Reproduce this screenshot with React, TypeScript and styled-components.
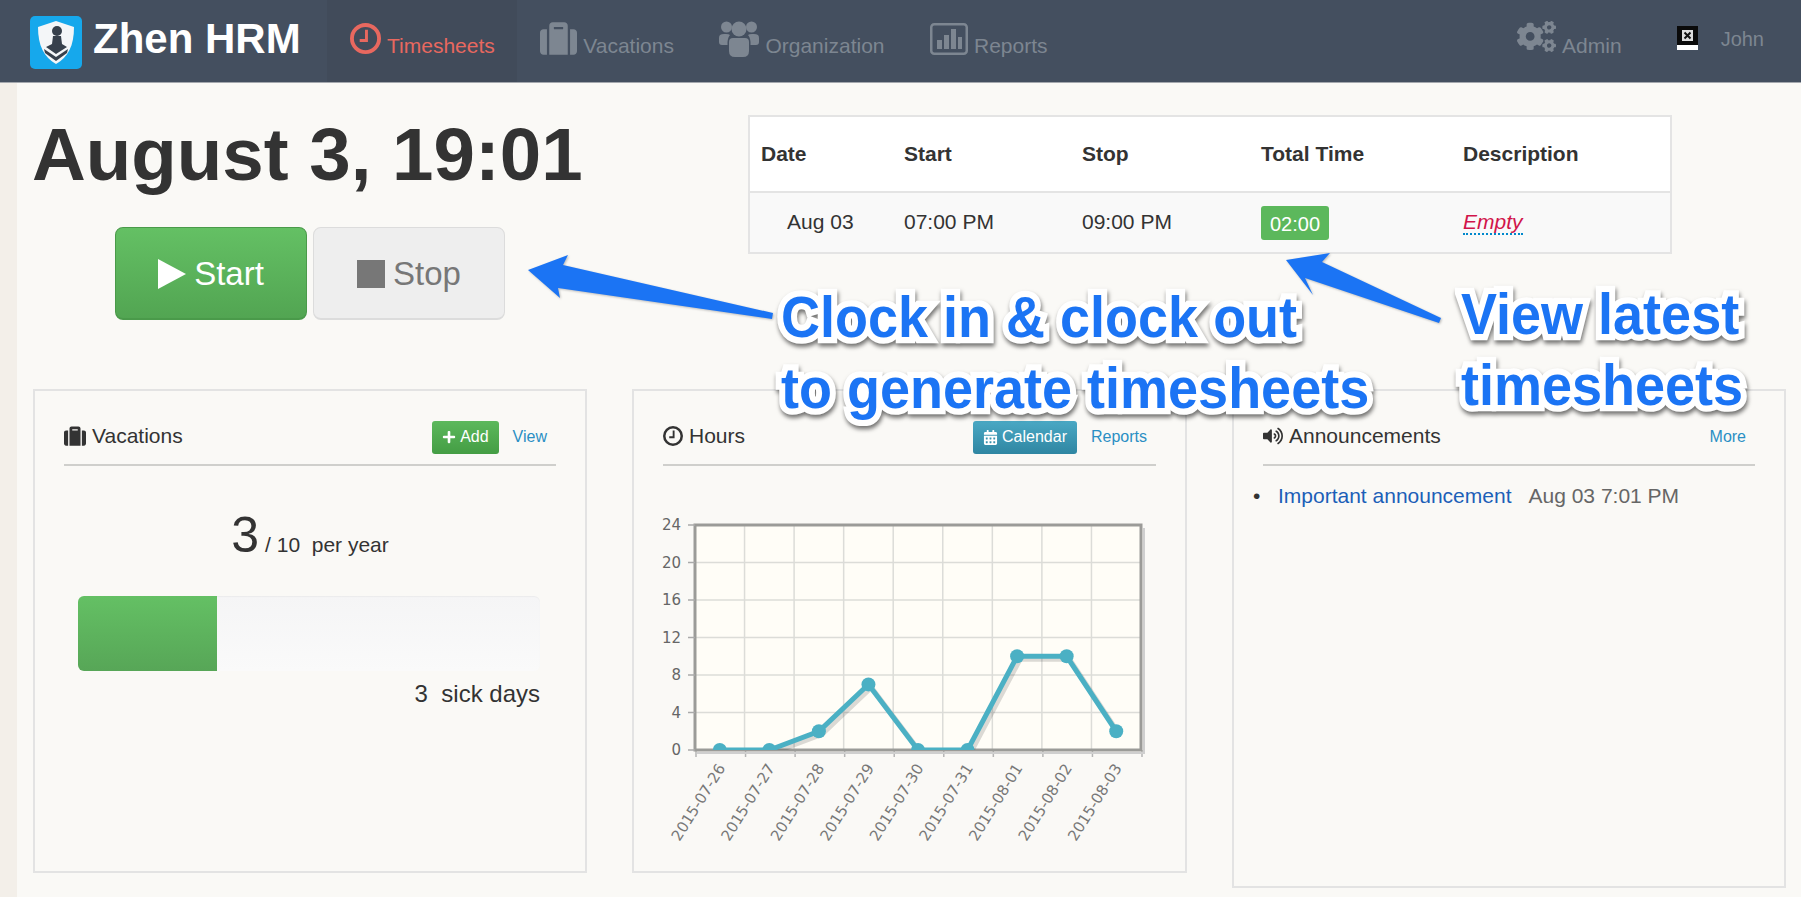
import { ReactNode } from "react"
import styled, { createGlobalStyle } from "styled-components"
import { FaCalendarAlt, FaCogs, FaPlus, FaSuitcase, FaVolumeUp } from "react-icons/fa"

const GlobalStyle = createGlobalStyle`
  html, body {
    margin: 0;
    padding: 0;
    background: #faf9f6;
    font-family: "Liberation Sans", Arial, sans-serif;
    color: #333333;
  }
  * { box-sizing: border-box; }
`

const Page = styled.div`
  position: relative;
  width: 1801px;
  height: 897px;
  overflow: hidden;
`

const Navbar = styled.header`
  display: flex;
  align-items: stretch;
  height: 83px;
  padding: 0 37px 0 30px;
  background: #444f5f;
  border-bottom: 1px solid #a4a8ae;
`

const Brand = styled.div`
  display: flex;
  align-items: center;
  gap: 11px;
  width: 297px;
  padding-bottom: 4px;
  color: #ffffff;
  font-size: 42px;
  font-weight: bold;
  & > svg {
    margin-top: 6px;
  }
`

const NavTab = styled.div<{ $active?: boolean }>`
  display: flex;
  align-items: center;
  gap: 6px;
  padding: 0 22.5px 0 23px;
  color: ${({ $active }) => ($active ? "#e8685f" : "#7d8691")};
  background: ${({ $active }) => ($active ? "#414b5a" : "transparent")};
  font-size: 21px;
  & > svg {
    margin-top: -5px;
  }
`

const NavLabel = styled.span`
  padding-top: 10px;
`

const NavRight = styled.div`
  display: flex;
  align-items: center;
  margin-left: auto;
`

const AdminItem = styled.div`
  display: flex;
  align-items: center;
  gap: 6px;
  color: #7d8691;
  font-size: 21px;
  margin-right: 55px;
  & > svg {
    margin-top: -9px;
  }
`

const UserName = styled.span`
  margin: -4px 0 0 23px;
  color: #7d8691;
  font-size: 20px;
`

const BrokenImage = styled.svg`
  margin-top: -7px;
`

const Body = styled.div`
  display: flex;
  height: 814px;
`

const Strip = styled.div`
  flex: none;
  width: 17px;
  background: #f3efe9;
`

const Main = styled.main`
  flex: 1;
  padding-left: 16px;
`

const TopRow = styled.section`
  display: flex;
  height: 306px;
`

const ClockColumn = styled.div`
  flex: none;
  width: 715px;
`

const Title = styled.h1`
  margin: 30px 0 30px -1px;
  color: #333333;
  font-size: 74.5px;
  font-weight: bold;
  line-height: 84px;
`

const ClockButtons = styled.div`
  display: flex;
  gap: 6px;
  margin-left: 82px;
`

const ClockButton = styled.button<{ $primary?: boolean }>`
  display: flex;
  align-items: center;
  justify-content: center;
  gap: 8px;
  width: 192px;
  height: 93px;
  padding: 2px 0 0;
  border: 1px solid ${({ $primary }) => ($primary ? "#4a9a4a" : "#dcdcdc")};
  border-bottom-width: 2px;
  border-radius: 8px;
  color: ${({ $primary }) => ($primary ? "#ffffff" : "#777777")};
  background: ${({ $primary }) =>
    $primary ? "linear-gradient(#64c064, #52a552)" : "#eeeeee"};
  font-family: inherit;
  font-size: 33px;
`

const TimesheetTable = styled.table`
  flex: none;
  width: 924px;
  height: 139px;
  margin-top: 32px;
  border: 2px solid #e4e4e4;
  border-collapse: collapse;
  table-layout: fixed;
  background: #ffffff;
  font-size: 21px;
`

const HeadCell = styled.th<{ $width?: number }>`
  width: ${({ $width }) => ($width ? `${$width}px` : "auto")};
  height: 76px;
  padding: 0 0 0 11px;
  border-bottom: 2px solid #e4e4e4;
  text-align: left;
  font-size: 21px;
`

const DataCell = styled.td<{ $indent?: number }>`
  height: 61px;
  padding: 0 0 2px ${({ $indent }) => $indent ?? 11}px;
  background: #f9f9f9;
  vertical-align: middle;
`

const TimeBadge = styled.span`
  display: inline-block;
  width: 68px;
  height: 34px;
  margin-top: 3px;
  border-radius: 3px;
  color: #ffffff;
  background: #5cb85c;
  font-size: 20px;
  line-height: 36px;
  text-align: center;
`

const EmptyValue = styled.span`
  color: #d1144a;
  font-style: italic;
  border-bottom: 2px dotted #0088cc;
`

const PanelGrid = styled.section`
  display: grid;
  grid-template-columns: 554px 555px 554px;
  gap: 45px;
  align-items: start;
`

const Panel = styled.article<{ $height: number }>`
  height: ${({ $height }) => $height}px;
  padding: 30px 29px 0;
  border: 2px solid #e3e3e3;
`

const PanelHead = styled.div`
  display: flex;
  align-items: center;
  height: 45px;
  padding-bottom: 11px;
  border-bottom: 2px solid #cfcfcc;
`

const PanelTitle = styled.h2`
  display: flex;
  align-items: center;
  gap: 6px;
  margin: -3px auto 0 0;
  color: #333333;
  font-size: 21px;
  font-weight: normal;
`

const SmallButton = styled.span<{ $color: "green" | "blue" }>`
  display: flex;
  align-items: center;
  justify-content: center;
  gap: 4px;
  height: 33px;
  margin-right: 14px;
  padding: 0 10px;
  border-radius: 3px;
  color: #ffffff;
  background: ${({ $color }) =>
    $color === "green"
      ? "linear-gradient(#5cb85c, #449d44)"
      : "linear-gradient(#4aa8c4, #2f86a2)"};
  font-size: 16px;
`

const PanelLink = styled.a`
  margin-right: 9px;
  color: #2a8fc4;
  font-size: 16px;
`

const VacationSummary = styled.div`
  display: flex;
  align-items: baseline;
  justify-content: center;
  gap: 6px;
  margin: 42px 0 24px;
  font-size: 21px;
  line-height: 54px;
`

const BigNumber = styled.span`
  font-size: 50px;
`

const ProgressTrack = styled.div`
  height: 75px;
  margin: 0 16px 0 14px;
  overflow: hidden;
  border-radius: 6px;
  background: linear-gradient(#f5f5f6, #fafafa);
  box-shadow: inset 0 1px 1px rgba(0, 0, 0, 0.04);
`

const ProgressFill = styled.div`
  height: 100%;
  background: linear-gradient(#64c064, #57a657);
`

const SickDays = styled.div`
  margin: 9px 16px 0 14px;
  font-size: 24px;
  text-align: right;
  white-space: pre;
`

const ChartFrame = styled.svg`
  display: block;
  margin: 51px 0 0 -28px;
`

const AnnouncementItem = styled.div`
  display: flex;
  align-items: center;
  margin: 18px 0 0 -10px;
  font-size: 21px;
`

const Bullet = styled.span`
  width: 25px;
`

const AnnouncementLink = styled.a`
  margin-right: 17px;
  color: #1c5fb8;
`

const AnnouncementDate = styled.span`
  color: #666666;
`

const Callout = styled.div<{ $left: number; $top: number }>`
  position: absolute;
  left: ${({ $left }) => $left}px;
  top: ${({ $top }) => $top}px;
  color: #1b74f4;
  font-size: 54px;
  font-weight: bold;
  line-height: 68px;
  white-space: pre;
  transform: scaleY(1.05);
  transform-origin: top left;
  -webkit-text-stroke: 12px #ffffff;
  paint-order: stroke fill;
  filter: drop-shadow(1px 3px 2px rgba(0, 0, 0, 0.55));
`

const ArrowLayer = styled.svg`
  position: absolute;
  left: 0;
  top: 0;
  filter: drop-shadow(1px 1px 1px rgba(0, 0, 0, 0.25));
`

const chartValues = [0, 0, 2, 7, 0, 0, 10, 10, 2]
const chartDates = [
  "2015-07-26",
  "2015-07-27",
  "2015-07-28",
  "2015-07-29",
  "2015-07-30",
  "2015-07-31",
  "2015-08-01",
  "2015-08-02",
  "2015-08-03",
]

const plotLeft = 60
const plotTop = 8
const plotWidth = 446
const plotHeight = 225
const stepX = plotWidth / 9
const valueY = (value: number) => plotTop + plotHeight - (value / 24) * plotHeight

function Logo() {
  return (
    <svg width="52" height="53" viewBox="0 0 52 53">
      <rect width="52" height="53" rx="5" fill="#16a8ec" />
      <path d="M26 5 L44 11 C44 30 38 41 26 48 C14 41 8 30 8 11 Z" fill="#f4f6f8" />
      <circle cx="27" cy="15" r="5" fill="#37404c" />
      <path d="M23 20 h8 l1 8 l5 3 l-11 7 l-10 -7 l6 -3 Z" fill="#37404c" />
      <path d="M14 33 l12 8 l12 -8 l-1 4 l-11 8 l-11 -8 Z" fill="#37404c" />
    </svg>
  )
}

// the clock-o of the old icon font: hands at twelve and nine
function ClockIcon({ size, weight }: { size: number; weight: number }) {
  return (
    <svg width={size} height={size} viewBox="0 0 32 32" fill="none" stroke="currentColor">
      <circle cx="16" cy="16" r={16 - weight / 2} strokeWidth={weight} />
      <path d="M17 7 V18 H10" strokeWidth={weight * 0.75} />
    </svg>
  )
}

function GroupIcon() {
  return (
    <svg width="40" height="37" viewBox="0 0 40 37" fill="currentColor">
      <circle cx="7.5" cy="7" r="5.5" />
      <circle cx="32.5" cy="7" r="5.5" />
      <circle cx="20" cy="9" r="7.5" />
      <path d="M1 15 Q3 13.5 7 14 Q10 14 11 15 Q9 17 8.5 22 V25 H3 Q0 25 0 22 V18 Q0 16 1 15 Z" />
      <path d="M39 15 Q37 13.5 33 14 Q30 14 29 15 Q31 17 31.5 22 V25 H37 Q40 25 40 22 V18 Q40 16 39 15 Z" />
      <path d="M10 22 Q10 18 14 18 H26 Q30 18 30 22 V31 Q30 37 24 37 H16 Q10 37 10 31 Z" />
    </svg>
  )
}

function ReportIcon() {
  return (
    <svg width="38" height="32" viewBox="0 0 38 32" fill="currentColor">
      <rect x="1.25" y="1.25" width="35.5" height="29.5" rx="3" fill="none" stroke="currentColor" strokeWidth="2.5" />
      <rect x="7" y="17" width="5" height="9" />
      <rect x="14" y="12" width="5" height="14" />
      <rect x="21" y="6" width="5" height="20" />
      <rect x="28" y="14" width="4" height="12" />
    </svg>
  )
}

function PlayIcon() {
  return (
    <svg width="28" height="30" viewBox="0 0 28 30" fill="currentColor">
      <path d="M0 0 L28 15 L0 30 Z" />
    </svg>
  )
}

function StopIcon() {
  return (
    <svg width="28" height="28" viewBox="0 0 28 28" fill="currentColor">
      <rect width="28" height="28" />
    </svg>
  )
}

function HoursChart() {
  const points = chartValues.map((value, index) => ({
    x: plotLeft + stepX * (index + 0.5),
    y: valueY(value),
  }))
  const line = points.map((p) => `${p.x},${p.y}`).join(" ")
  const shadowLine = points.map((p) => `${p.x + 3},${p.y + 3}`).join(" ")

  return (
    <ChartFrame width="540" height="345" viewBox="0 0 540 345">
      <defs>
        <clipPath id="plot-clip">
          <rect x={plotLeft} y={plotTop - 12} width={plotWidth} height={plotHeight + 12} />
        </clipPath>
      </defs>
      <rect x={plotLeft} y={plotTop} width={plotWidth} height={plotHeight} fill="#fffdf7" />
      {[4, 8, 12, 16, 20].map((tick) => (
        <line
          key={`grid-y-${tick}`}
          x1={plotLeft}
          x2={plotLeft + plotWidth}
          y1={valueY(tick)}
          y2={valueY(tick)}
          stroke="#dcdcd8"
          strokeWidth="1.5"
        />
      ))}
      {chartDates.slice(1).map((date, index) => (
        <line
          key={`grid-x-${date}`}
          x1={plotLeft + stepX * (index + 1)}
          x2={plotLeft + stepX * (index + 1)}
          y1={plotTop}
          y2={plotTop + plotHeight}
          stroke="#dcdcd8"
          strokeWidth="1.5"
        />
      ))}
      {[...chartDates, "end"].map((date, index) => (
        <line
          key={`tick-x-${date}`}
          x1={plotLeft + stepX * index + 1}
          x2={plotLeft + stepX * index + 1}
          y1={plotTop + plotHeight}
          y2={plotTop + plotHeight + 7}
          stroke="#b5b5b5"
          strokeWidth="1.5"
        />
      ))}
      <polyline
        points={`${plotLeft + 2},${plotTop + plotHeight + 3} ${plotLeft + plotWidth + 3},${plotTop + plotHeight + 3} ${plotLeft + plotWidth + 3},${plotTop + 3}`}
        fill="none"
        stroke="#cfcfcf"
        strokeWidth="2"
      />
      <rect x={plotLeft} y={plotTop} width={plotWidth} height={plotHeight} fill="none" stroke="#9b9b98" strokeWidth="3" />
      {[0, 4, 8, 12, 16, 20, 24].map((tick) => (
        <g key={`tick-y-${tick}`}>
          <line x1={plotLeft - 7} x2={plotLeft} y1={valueY(tick)} y2={valueY(tick)} stroke="#aaaaaa" strokeWidth="1.5" />
          <text x={plotLeft - 14} y={valueY(tick) + 5} textAnchor="end" fontFamily="DejaVu Sans" fontSize="15" fill="#666666">
            {tick}
          </text>
        </g>
      ))}
      {chartDates.map((date, index) => {
        const x = plotLeft + stepX * (index + 0.5) + 6
        const y = plotTop + plotHeight + 18
        return (
          <text
            key={date}
            x={x}
            y={y}
            transform={`rotate(-58 ${x} ${y})`}
            textAnchor="end"
            fontFamily="DejaVu Sans"
            fontSize="15"
            fill="#777777"
          >
            {date}
          </text>
        )
      })}
      <g clipPath="url(#plot-clip)">
        <polyline points={shadowLine} fill="none" stroke="rgba(0,0,0,0.14)" strokeWidth="5" />
        <polyline points={line} fill="none" stroke="#4bb0c4" strokeWidth="5" />
        {points.map((p) => (
          <circle key={`dot-${p.x}`} cx={p.x} cy={p.y} r="7" fill="#4bb0c4" />
        ))}
      </g>
    </ChartFrame>
  )
}

function PanelHeader({ icon, title, children }: { icon: ReactNode; title: string; children: ReactNode }) {
  return (
    <PanelHead>
      <PanelTitle>
        {icon}
        {title}
      </PanelTitle>
      {children}
    </PanelHead>
  )
}

const App = () => {
  return (
    <Page>
      <GlobalStyle />
      <Navbar>
        <Brand>
          <Logo />
          Zhen HRM
        </Brand>
        <NavTab $active>
          <ClockIcon size={31} weight={4} />
          <NavLabel>Timesheets</NavLabel>
        </NavTab>
        <NavTab>
          <FaSuitcase size={37} />
          <NavLabel>Vacations</NavLabel>
        </NavTab>
        <NavTab>
          <GroupIcon />
          <NavLabel>Organization</NavLabel>
        </NavTab>
        <NavTab>
          <ReportIcon />
          <NavLabel>Reports</NavLabel>
        </NavTab>
        <NavRight>
          <AdminItem>
            <FaCogs size={39} />
            <NavLabel>Admin</NavLabel>
          </AdminItem>
          <BrokenImage width="21" height="24" viewBox="0 0 21 24">
            <rect width="21" height="24" fill="#ffffff" />
            <rect width="21" height="19" fill="#0a0a0a" />
            <rect x="5" y="4" width="11" height="11" fill="#dddddd" />
            <path d="M7.5 6.5 l6 6 M13.5 6.5 l-6 6" stroke="#111111" strokeWidth="2" />
          </BrokenImage>
          <UserName>John</UserName>
        </NavRight>
      </Navbar>

      <Body>
        <Strip />
        <Main>
          <TopRow>
            <ClockColumn>
              <Title>August 3, 19:01</Title>
              <ClockButtons>
                <ClockButton $primary>
                  <PlayIcon />
                  Start
                </ClockButton>
                <ClockButton>
                  <StopIcon />
                  Stop
                </ClockButton>
              </ClockButtons>
            </ClockColumn>
            <TimesheetTable>
              <thead>
                <tr>
                  <HeadCell $width={144}>Date</HeadCell>
                  <HeadCell $width={178}>Start</HeadCell>
                  <HeadCell $width={179}>Stop</HeadCell>
                  <HeadCell $width={202}>Total Time</HeadCell>
                  <HeadCell>Description</HeadCell>
                </tr>
              </thead>
              <tbody>
                <tr>
                  <DataCell $indent={37}>Aug 03</DataCell>
                  <DataCell>07:00 PM</DataCell>
                  <DataCell>09:00 PM</DataCell>
                  <DataCell>
                    <TimeBadge>02:00</TimeBadge>
                  </DataCell>
                  <DataCell>
                    <EmptyValue>Empty</EmptyValue>
                  </DataCell>
                </tr>
              </tbody>
            </TimesheetTable>
          </TopRow>

          <PanelGrid>
            <Panel $height={484}>
              <PanelHeader icon={<FaSuitcase size={22} />} title="Vacations">
                <SmallButton $color="green">
                  <FaPlus size={14} />
                  Add
                </SmallButton>
                <PanelLink>View</PanelLink>
              </PanelHeader>
              <VacationSummary>
                <BigNumber>3</BigNumber>
                <span>/ 10&nbsp; per year</span>
              </VacationSummary>
              <ProgressTrack>
                <ProgressFill style={{ width: `${(3 / 10) * 100}%` }} />
              </ProgressTrack>
              <SickDays>3  sick days</SickDays>
            </Panel>

            <Panel $height={484}>
              <PanelHeader icon={<ClockIcon size={20} weight={4} />} title="Hours">
                <SmallButton $color="blue">
                  <FaCalendarAlt size={15} />
                  Calendar
                </SmallButton>
                <PanelLink>Reports</PanelLink>
              </PanelHeader>
              <HoursChart />
            </Panel>

            <Panel $height={499}>
              <PanelHeader icon={<FaVolumeUp size={20} />} title="Announcements">
                <PanelLink>More</PanelLink>
              </PanelHeader>
              <AnnouncementItem>
                <Bullet>•</Bullet>
                <AnnouncementLink>Important announcement</AnnouncementLink>
                <AnnouncementDate>Aug 03 7:01 PM</AnnouncementDate>
              </AnnouncementItem>
            </Panel>
          </PanelGrid>
        </Main>
      </Body>

      <ArrowLayer width="1801" height="897" viewBox="0 0 1801 897">
        <path d="M528 270 L568 255 L563 265 L773 313 L772 319 L558 288 L560 298 Z" fill="#1b74f4" />
        <path d="M1286 260 L1330 253 L1322 262 L1441 318 L1439 323 L1305 278 L1313 295 Z" fill="#1b74f4" />
      </ArrowLayer>
      <Callout $left={781} $top={281}>{"Clock in & clock out\nto generate timesheets"}</Callout>
      <Callout $left={1461} $top={278}>{"View latest\ntimesheets"}</Callout>
    </Page>
  )
}

export default App
